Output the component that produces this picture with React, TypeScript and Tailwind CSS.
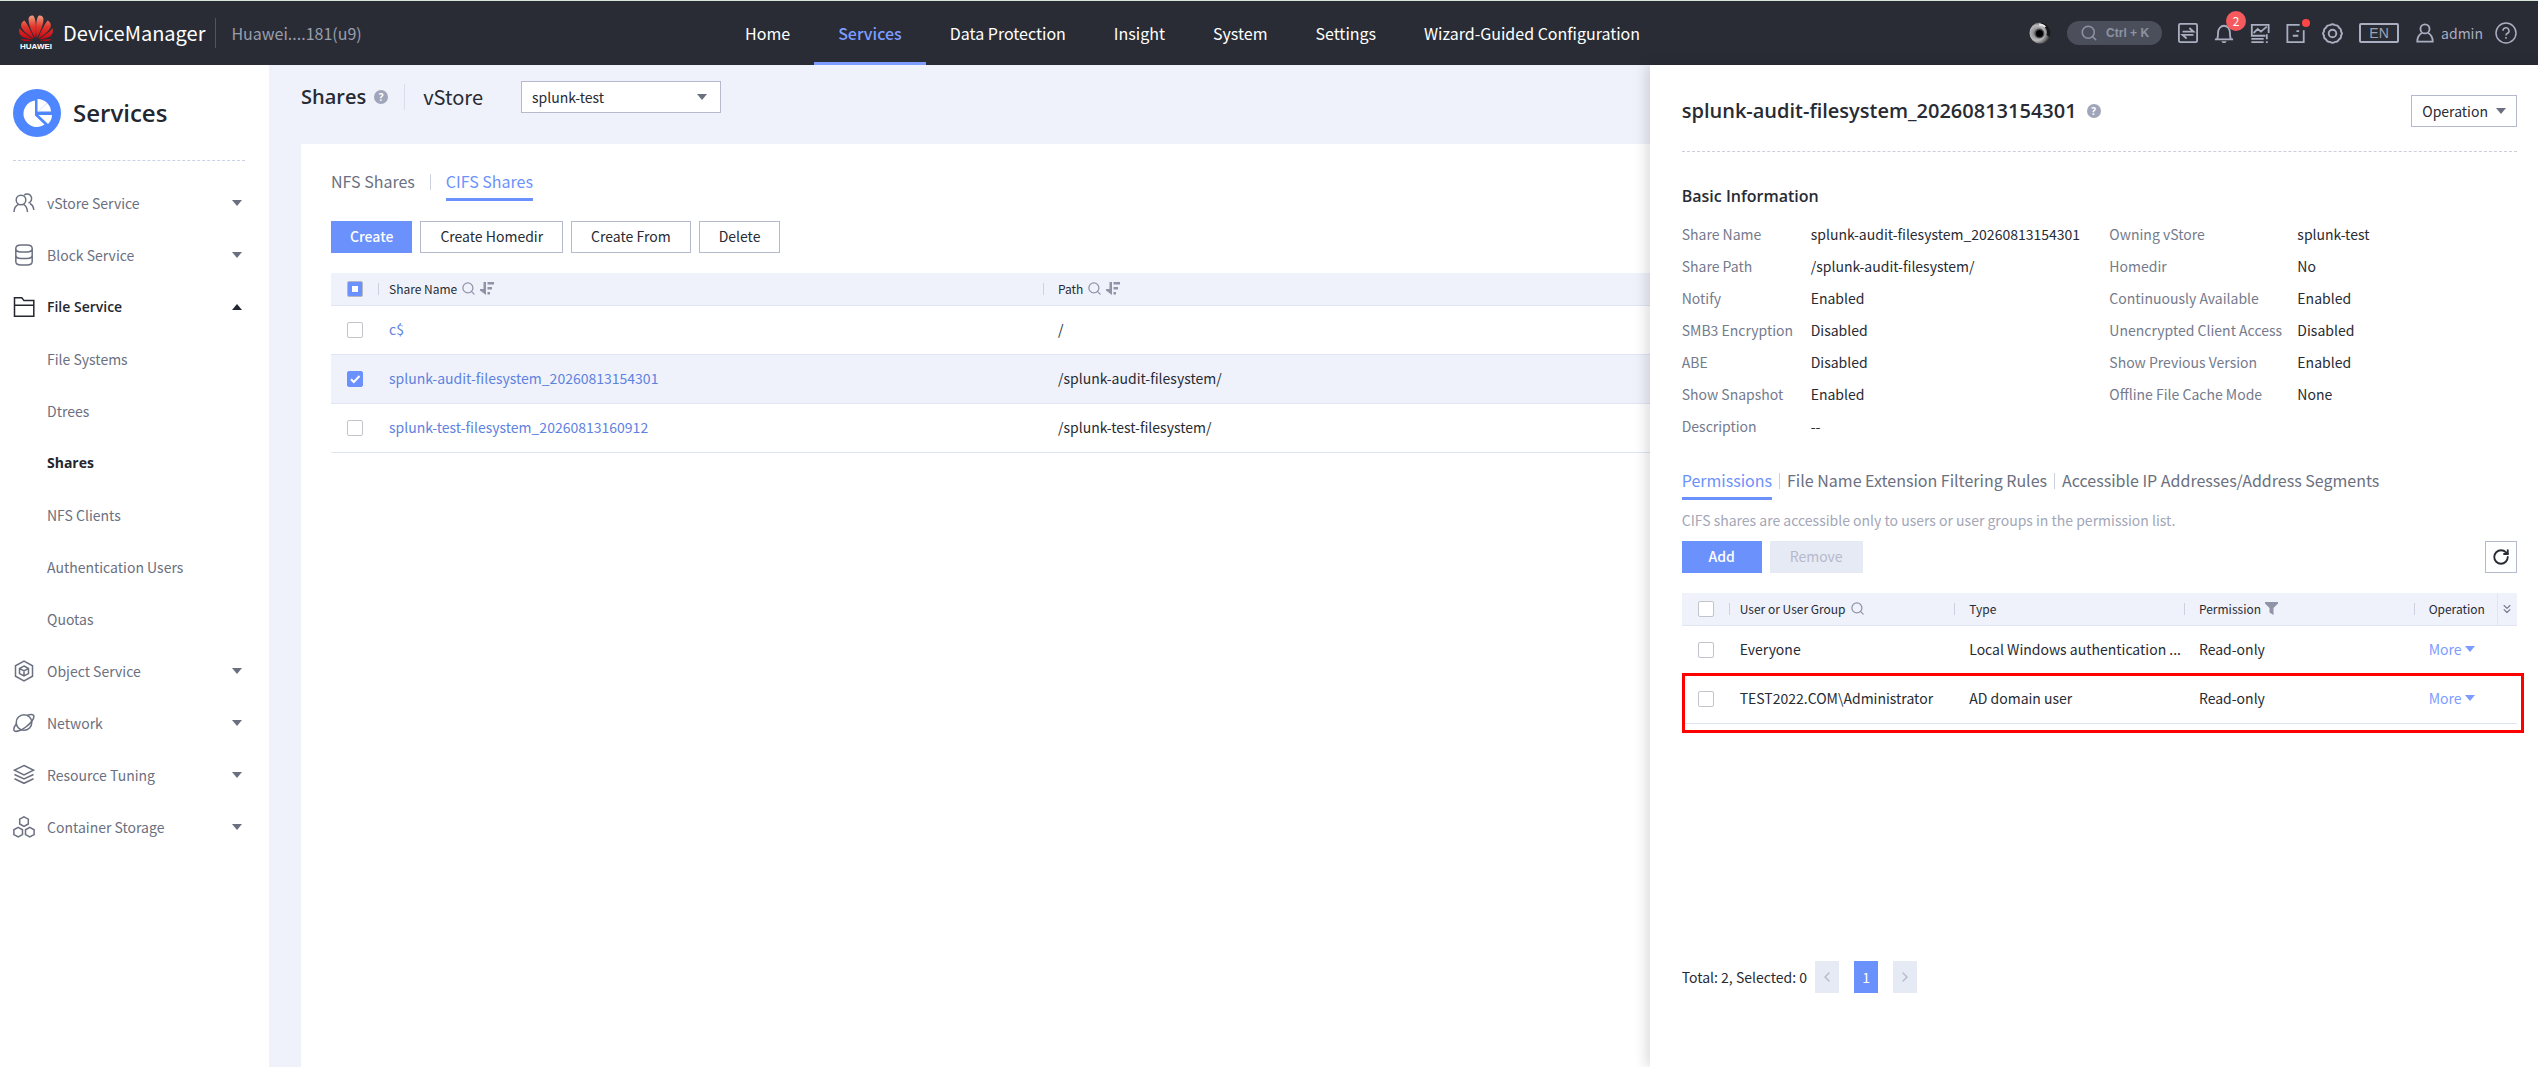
import type { ReactNode } from "react"
import { ChevronLeft, ChevronRight, ChevronsDown, RotateCw, Search } from "lucide-react"

const navItems = [
  "Home",
  "Services",
  "Data Protection",
  "Insight",
  "System",
  "Settings",
  "Wizard-Guided Configuration",
]

const shares = [
  { name: "c$", path: "/", checked: false },
  { name: "splunk-audit-filesystem_20260813154301", path: "/splunk-audit-filesystem/", checked: true },
  { name: "splunk-test-filesystem_20260813160912", path: "/splunk-test-filesystem/", checked: false },
]

const basicInfo = [
  ["Share Name", "splunk-audit-filesystem_20260813154301"],
  ["Owning vStore", "splunk-test"],
  ["Share Path", "/splunk-audit-filesystem/"],
  ["Homedir", "No"],
  ["Notify", "Enabled"],
  ["Continuously Available", "Enabled"],
  ["SMB3 Encryption", "Disabled"],
  ["Unencrypted Client Access", "Disabled"],
  ["ABE", "Disabled"],
  ["Show Previous Version", "Enabled"],
  ["Show Snapshot", "Enabled"],
  ["Offline File Cache Mode", "None"],
  ["Description", "--"],
]

const permissions = [
  { user: "Everyone", type: "Local Windows authentication ...", permission: "Read-only" },
  { user: "TEST2022.COM\\Administrator", type: "AD domain user", permission: "Read-only" },
]

const fileServiceItems = ["File Systems", "Dtrees", "Shares", "NFS Clients", "Authentication Users", "Quotas"]

/* ---------- icons ---------- */

const LineIcon = ({ children, className = "h-[22px] w-[22px]" }: { children: ReactNode; className?: string }) => (
  <svg viewBox="0 0 22 22" className={className} fill="none" stroke="currentColor" strokeWidth="1.5" aria-hidden="true">
    {children}
  </svg>
)

const VStoreIcon = () => (
  <LineIcon>
    <circle cx="8" cy="8" r="4.8" />
    <path d="M1 20c0-3.600 1.800-6.200 4.500-7.600M10.500 12.400C13 13.600 14.200 16 14.500 20M11 3.200a4.600 4.600 0 1 1 4.500 7.800M17 11.500c2.200 1.200 3.500 3 3.800 6.500" />
  </LineIcon>
)

const BlockIcon = () => (
  <LineIcon>
    <path d="M2.800 4.500C2.800 2.200 5 1 8 1h6c3 0 5.200 1.200 5.200 3.500v13c0 2.300-2.200 3.500-5.200 3.500H8c-3 0-5.200-1.200-5.200-3.500zM2.800 4.500C2.800 6.800 5 8 8 8h6c3 0 5.200-1.200 5.200-3.500M2.800 11c0 2.200 2.200 3.500 5.200 3.500h6c3 0 5.200-1.300 5.200-3.500" />
  </LineIcon>
)

const FolderIcon = () => (
  <LineIcon>
    <path d="M1.500 20.200V1.800h7.300L11 4.600h9.800v15.600zM1.500 9.200h19.300" />
  </LineIcon>
)

const ObjectIcon = () => (
  <LineIcon>
    <path d="M11 1.200l8.500 4.600v10.400L11 20.800l-8.500-4.600V5.800z" />
    <path d="M11 6l4.500 2.400v5.200L11 16l-4.500-2.400V8.400zM6.500 8.400L11 11l4.500-2.600M11 11v5" />
  </LineIcon>
)

const NetworkIcon = () => (
  <LineIcon>
    <circle cx="11" cy="10.500" r="7.800" />
    <path d="M14 3.500c3.500-1.500 6.300-1.400 6.800.3.800 2.600-3 7.500-8 11.200-4.800 3.500-10 5.500-11.600 3.500-.9-1.200-.2-3.500 2-6.500" />
  </LineIcon>
)

const LayersIcon = () => (
  <LineIcon>
    <path d="M11 1.500l9.500 4.700-9.500 4.700-9.500-4.700zM1.500 10.500L11 15l9.500-4.500M1.500 14.800L11 19.300l9.500-4.500" />
  </LineIcon>
)

const ContainerIcon = () => (
  <LineIcon>
    <path d="M11 .8l4.300 2.400V8L11 10.400 6.700 8V3.200zM5.200 11.400l4.300 2.400v4.800l-4.300 2.400-4.300-2.400v-4.800zM16.800 11.400l4.300 2.400v4.800L16.800 21l-4.300-2.400v-4.800z" />
  </LineIcon>
)

const Triangle = ({ up = false, className = "h-[6px] w-[10px]" }: { up?: boolean; className?: string }) => (
  <svg viewBox="0 0 10 6" className={className} fill="currentColor" aria-hidden="true">
    {up ? <path d="M5 0l5 6H0z" /> : <path d="M0 0h10L5 6z" />}
  </svg>
)

const SortIcon = () => (
  <svg viewBox="0 0 14 13" className="h-[13px] w-[14px] text-[#9094a8]" fill="currentColor" aria-hidden="true">
    <path d="M3.500 0h2.500v13L0 8.500V7h3.500zM7.500 0H14v2.500H7.500zM7.500 5H12v2.500H7.500zM7.500 10H10v2.500H7.500z" />
  </svg>
)

const FilterIcon = () => (
  <svg viewBox="0 0 13 13" className="h-[13px] w-[13px] text-[#9094a8]" fill="currentColor" aria-hidden="true">
    <path d="M0 0h13v1.500L8.500 6v7l-4-2.500V6L0 1.500z" />
  </svg>
)

const HelpDot = () => (
  <button
    aria-label="Help"
    className="flex h-[14px] w-[14px] items-center justify-center rounded-full bg-[#a0a5b9] font-['Open_Sans',sans-serif] text-[10px] leading-[14px] font-bold text-white"
  >
    ?
  </button>
)

const HuaweiLogo = () => (
  <div className="flex w-[34px] flex-col items-center">
    <svg viewBox="0 0 34 26" className="h-[26px] w-[34px]" aria-hidden="true">
      <defs>
        <linearGradient id="petal" x1="0" y1="0" x2="0" y2="26" gradientUnits="userSpaceOnUse">
          <stop offset="0" stopColor="#f3a083" />
          <stop offset="0.45" stopColor="#e0362c" />
          <stop offset="1" stopColor="#c4000f" />
        </linearGradient>
        <g id="half">
          <path d="M17.700 23.300C16.700 16 16.600 3.800 19.700.8c1.600-.9 4.400.3 4.700 2.800.5 5.500-3.500 14-6.700 19.700z" />
          <path d="M19 23.600C21.500 17.500 25.700 8.500 28.600 5.500c2.500 1.200 4 4 3 6.700-1.800 4.300-8.600 9.300-12.600 11.400z" />
          <path d="M20 24.300c4.500-3.200 11-7.500 13.700-11 .7 3.500-.1 7-3.600 8.700-2.700 1.300-7 2-10.100 2.300z" />
          <path d="M20 25c3.600-.4 8.500-.8 12-1-1.500 2.200-4.500 2.500-7 1.900-1.700-.4-3.500-.6-5-.9z" />
        </g>
      </defs>
      <g fill="url(#petal)">
        <use href="#half" />
        <use href="#half" transform="translate(34 0) scale(-1 1)" />
      </g>
    </svg>
    <span className="mt-0.5 font-['Liberation_Sans',sans-serif] text-[8px] leading-[8px] font-bold text-white">HUAWEI</span>
  </div>
)

const ServicesIcon = () => (
  <svg viewBox="0 0 48 48" className="h-12 w-12" aria-hidden="true">
    <circle cx="24" cy="24" r="24" fill="#4d86ff" />
    <path d="M22 11.500V26.500L31.500 35.500A13.300 13.300 0 1 1 22 11.500z" fill="#fff" />
    <path d="M24.500 10A13.500 13.500 0 0 1 38 22.500H24.500z" fill="#fff" />
    <path d="M25.500 26H39a13 13 0 0 1-4 9z" fill="#fff" />
    <path d="M25 22.500L34 14" stroke="#d5e2ff" strokeWidth="1" />
  </svg>
)

const EyeIcon = () => (
  <svg viewBox="0 0 22 22" className="h-[22px] w-[22px]" aria-hidden="true">
    <defs>
      <radialGradient id="eye" cx="0.35" cy="0.5" r="0.65">
        <stop offset="0" stopColor="#6d6d70" />
        <stop offset="0.55" stopColor="#b9b9bc" />
        <stop offset="1" stopColor="#2c2c2e" />
      </radialGradient>
    </defs>
    <circle cx="11" cy="11" r="10.500" fill="url(#eye)" />
    <path d="M11 .5A10.500 10.500 0 0 1 20.500 15l-3-2A7.500 7.500 0 0 0 15 4.500z" fill="#17171a" />
    <path d="M10 1.500c3 0 5.500 1 7 3l-1.500 1.300C14 4.300 12 3.500 10 3.700z" fill="#e6e6e8" />
    <circle cx="10.500" cy="11.500" r="5" fill="#4a4a4d" />
    <circle cx="10.500" cy="11.500" r="3.500" fill="#000" />
  </svg>
)

/* ---------- shared pieces ---------- */

interface CheckBoxProps {
  label: string
  state?: "on" | "off" | "some"
}

const CheckBox = ({ label, state = "off" }: CheckBoxProps) => (
  <span className="relative ml-4 grid h-4 w-4 place-items-center">
    <input
      type="checkbox"
      aria-label={label}
      defaultChecked={state === "on"}
      className={`h-4 w-4 appearance-none rounded-[2px] border ${
        state === "off"
          ? "border-[#c2c4c9] bg-white"
          : state === "on"
            ? "border-[#6b91fc] bg-[#6b91fc]"
            : "border-[#b5b9c6] bg-[#6b91fc]"
      }`}
    />
    {state === "on" && (
      <svg viewBox="0 0 16 16" className="pointer-events-none absolute inset-0 h-4 w-4" fill="none" stroke="#fff" strokeWidth="2" aria-hidden="true">
        <path d="M4 8.200l2.800 2.800L12.500 5" />
      </svg>
    )}
    {state === "some" && <span className="pointer-events-none absolute h-1.5 w-1.5 bg-white" />}
  </span>
)

const HeadCell = ({ children, narrow = false }: { children: ReactNode; narrow?: boolean }) => (
  <th className="p-0 text-left font-normal">
    <div
      className={`flex h-3 items-center gap-1 border-l border-[#ced2e0] text-xs leading-3 ${narrow ? "pl-2.5" : "pl-[14px]"}`}
    >
      {children}
    </div>
  </th>
)

const SearchMark = () => <Search className="h-[15px] w-[15px] text-[#9094a8]" strokeWidth={2} aria-hidden="true" />

const PlainButton = ({ children }: { children: ReactNode }) => (
  <button className="h-8 border border-[#b5b9cc] bg-white px-[19px] pb-0.5 text-sm text-[#282b33]">{children}</button>
)

/* ---------- page parts ---------- */

const TopBar = () => (
  <header className="flex h-[65px] shrink-0 items-center border-t border-[#d7e6d8] bg-[#292c35] pr-[21px]">
    <div className="flex w-[28.650%] shrink-0 items-center pl-[19px]">
      <HuaweiLogo />
      <span className="ml-[10px] text-xl text-white">DeviceManager</span>
      <span className="ml-[10px] h-[30px] w-px bg-[#515561]" />
      <span className="ml-[15px] text-base text-[#999eac]">Huawei....181(u9)</span>
    </div>
    <nav className="flex h-full items-stretch">
      {navItems.map((item) => (
        <a
          key={item}
          href="#"
          className={`flex items-center border-y-[3px] border-t-transparent px-6 text-base whitespace-nowrap ${
            item === "Services"
              ? "border-b-[#7d9cff] font-medium text-[#7d9cff]"
              : "border-b-transparent text-white"
          }`}
        >
          {item}
        </a>
      ))}
    </nav>
    <div className="ml-auto flex items-center gap-4 text-[#a9aec0]">
      <EyeIcon />
      <button className="flex h-6 w-[95px] items-center gap-2 rounded-full bg-[#4b4f5b] pl-[13px] text-[#8e93a3]">
        <Search className="h-[18px] w-[18px]" strokeWidth={2} />
        <span className="font-['Liberation_Sans',sans-serif] text-xs font-bold">Ctrl + K</span>
      </button>
      <button aria-label="Transfer">
        <LineIcon className="h-5 w-5">
          <rect x="1" y="1" width="20" height="20" rx="1.500" strokeWidth="2" />
          <path d="M5 9.500h12L12.500 5.500M17 13H5l4.500 4" strokeWidth="2" />
        </LineIcon>
      </button>
      <button aria-label="Alarms" className="relative">
        <LineIcon className="h-5 w-5">
          <path d="M1 18h20M3.500 17.500c1-2 1-4 1-7a6.500 7.500 0 0 1 13 0c0 3 0 5 1 7" strokeWidth="2" />
          <path d="M8 20h6l-1.500 2h-3z" fill="currentColor" stroke="none" />
        </LineIcon>
        <span className="absolute -top-3 left-3 flex h-5 w-5 items-center justify-center rounded-full bg-[#f65a5f] text-xs leading-5 text-white">
          2
        </span>
      </button>
      <button aria-label="Performance">
        <LineIcon className="h-5 w-5">
          <path d="M17 14H2V2h18.500v9M4 11l4.500-4.500 3.500 3L18.500 4M1.500 17.500H15M1.500 21H15M18.500 12.500V18M18.500 20v2" strokeWidth="2" />
        </LineIcon>
      </button>
      <button aria-label="Tasks" className="relative">
        <LineIcon className="h-5 w-5">
          <path d="M15 2H1.500v19h18V8M7.500 14h6M11.500 9h3" strokeWidth="2" />
        </LineIcon>
        <span className="absolute -top-1 -right-1 h-2 w-2 rounded-full bg-[#ff4545]" />
      </button>
      <button aria-label="Preferences">
        <LineIcon className="h-[21px] w-[21px]">
          <path
            d="M8.500 2.200Q11 .4 13.500 2.200 16.800 2 17.800 4.800 20.500 6.200 19.900 9 22 11 19.900 13 20.500 15.800 17.800 17.200 16.800 20 13.500 19.800 11 21.600 8.500 19.800 5.200 20 4.200 17.200 1.500 15.800 2.100 13 0 11 2.100 9 1.500 6.200 4.200 4.800 5.200 2 8.500 2.200z"
            strokeWidth="2"
          />
          <circle cx="11" cy="11" r="4" strokeWidth="2" />
        </LineIcon>
      </button>
      <button className="h-5 w-10 rounded-[2px] border-2 border-[#a9aec0] font-['Liberation_Sans',sans-serif] text-sm leading-4 text-[#9da2b3]">
        EN
      </button>
      <div className="flex items-center gap-3">
        <button className="flex items-center gap-1.5 text-sm">
          <LineIcon className="h-5 w-5">
            <circle cx="11" cy="6.500" r="5" strokeWidth="2" />
            <path d="M7.500 11C4 13 2.500 16 2.500 20.500h17c0-4.500-1.500-7.500-5-9.500" strokeWidth="2" />
          </LineIcon>
          admin
        </button>
        <button aria-label="Help">
          <LineIcon>
            <circle cx="11" cy="11" r="10" />
            <path d="M8 8.800a3 3 0 1 1 4.200 2.700c-.8.4-1.200.8-1.200 1.900M11 15v1.800" />
          </LineIcon>
        </button>
      </div>
    </div>
  </header>
)

interface MenuGroupProps {
  icon: ReactNode
  label: string
  open?: boolean
}

const MenuGroup = ({ icon, label, open = false }: MenuGroupProps) => (
  <button
    className={`flex h-[52px] w-full items-center gap-3 pr-[3px] text-left text-sm ${
      open ? "font-['Open_Sans',sans-serif] font-semibold text-[#24272f]" : "text-[#6b7080]"
    }`}
  >
    {icon}
    <span className="flex-1">{label}</span>
    <Triangle up={open} />
  </button>
)

const Sidebar = () => (
  <aside className="w-[269px] shrink-0 bg-white pt-6 pr-6 pl-[13px]">
    <div className="flex items-center gap-3">
      <ServicesIcon />
      <h1 className="font-['Open_Sans',sans-serif] text-2xl font-semibold text-[#24272f]">Services</h1>
    </div>
    <div className="mt-[23px] border-t border-dashed border-[#ccd2e6]" />
    <nav className="mt-4">
      <MenuGroup icon={<VStoreIcon />} label="vStore Service" />
      <MenuGroup icon={<BlockIcon />} label="Block Service" />
      <MenuGroup icon={<FolderIcon />} label="File Service" open />
      {fileServiceItems.map((item) => (
        <a
          key={item}
          href="#"
          className={`flex h-[52px] items-center pl-[34px] text-sm ${
            item === "Shares" ? "font-['Open_Sans',sans-serif] font-bold text-[#24272f]" : "text-[#6b7080]"
          }`}
        >
          {item}
        </a>
      ))}
      <MenuGroup icon={<ObjectIcon />} label="Object Service" />
      <MenuGroup icon={<NetworkIcon />} label="Network" />
      <MenuGroup icon={<LayersIcon />} label="Resource Tuning" />
      <MenuGroup icon={<ContainerIcon />} label="Container Storage" />
    </nav>
  </aside>
)

const SharesPage = () => (
  <main className="flex min-w-0 flex-1 flex-col bg-[#eff2fb] pr-8 pl-8">
    <div className="flex h-[79px] items-start pt-4">
      <div className="flex h-8 items-center">
        <h2 className="font-['Open_Sans',sans-serif] text-xl font-semibold text-[#282b33]">Shares</h2>
        <span className="ml-2">
          <HelpDot />
        </span>
        <span className="ml-4 h-[26px] w-px bg-[#d9deec]" />
        <label htmlFor="vstore" className="ml-[18px] text-xl">
          vStore
        </label>
        <span className="relative ml-[38px] flex items-center">
          <select
            id="vstore"
            className="h-8 w-[200px] appearance-none rounded-none border border-[#b5b9cc] bg-white px-2.5 text-sm"
          >
            <option>splunk-test</option>
          </select>
          <Triangle className="pointer-events-none absolute right-[14px] h-[6px] w-[10px] text-[#6b7080]" />
        </span>
      </div>
    </div>

    <section className="flex-1 bg-white px-[30px] pt-[22px]">
      <div className="flex items-start text-base">
        <button className="pb-0.5 leading-[30px] text-[#6b7080]">NFS Shares</button>
        <span className="mx-[15px] mt-2 h-4 w-px bg-[#ced2e0]" />
        <button className="border-b-[3px] border-[#6b91fc] pb-0.5 leading-[30px] text-[#6b91fc]">CIFS Shares</button>
      </div>

      <div className="mt-5 flex gap-2">
        <button className="h-8 bg-[#6b91fc] px-[19px] pb-0.5 text-sm font-medium text-white">Create</button>
        <PlainButton>Create Homedir</PlainButton>
        <PlainButton>Create From</PlainButton>
        <PlainButton>Delete</PlainButton>
      </div>

      <table className="mt-5 w-full table-fixed border-collapse text-left text-sm">
        <colgroup>
          <col className="w-[47px]" />
          <col className="w-[31%]" />
          <col />
        </colgroup>
        <thead>
          <tr className="h-8 border-b border-[#e0e5f4] bg-[#eff2fb]">
            <th className="p-0">
              <CheckBox label="Select all shares" state="some" />
            </th>
            <HeadCell narrow>
              Share Name
              <SearchMark />
              <SortIcon />
            </HeadCell>
            <HeadCell>
              Path
              <SearchMark />
              <SortIcon />
            </HeadCell>
          </tr>
        </thead>
        <tbody>
          {shares.map((share) => (
            <tr key={share.name} className={`h-[49px] border-b border-[#e0e5f4] ${share.checked ? "bg-[#eff2fb]" : ""}`}>
              <td className="p-0">
                <CheckBox label={`Select ${share.name}`} state={share.checked ? "on" : "off"} />
              </td>
              <td className="p-0 pb-0.5 pl-[11px]">
                <a href="#" className="text-[#5e82e0]">
                  {share.name}
                </a>
              </td>
              <td className="p-0 pb-0.5 pl-[15px]">{share.path}</td>
            </tr>
          ))}
        </tbody>
      </table>
    </section>
  </main>
)

const ShareDrawer = () => (
  <aside className="absolute inset-y-0 right-0 flex w-[35%] flex-col bg-white pt-[30px] pr-[21px] pb-[74px] pl-8 shadow-[-4px_0_12px_rgba(0,0,0,0.14)]">
    <div className="flex items-center border-b border-dashed border-[#ccced9] pb-6">
      <h2 className="font-['Open_Sans',sans-serif] text-xl font-semibold text-[#282b33]">
        splunk-audit-filesystem_20260813154301
      </h2>
      <span className="ml-2.5">
        <HelpDot />
      </span>
      <button className="ml-auto flex h-8 items-center gap-2 border border-[#b5b9cc] px-2.5 text-sm">
        Operation
        <Triangle className="h-[6px] w-[10px] text-[#6b7080]" />
      </button>
    </div>

    <h3 className="mt-8 font-['Open_Sans',sans-serif] text-base leading-6 font-semibold text-[#282b33]">
      Basic Information
    </h3>
    <dl className="mt-2.5 grid grid-cols-2 text-sm leading-8">
      {basicInfo.map(([label, value], index) => (
        <div key={label} className="flex whitespace-nowrap">
          <dt className={`shrink-0 text-[#757b8c] ${index % 2 ? "w-[198px] pl-2.5" : "w-[129px]"}`}>{label}</dt>
          <dd>{value}</dd>
        </div>
      ))}
    </dl>

    <div className="mt-[23px] flex items-start text-base text-[#6b7080]">
      <button className="border-b-[3px] border-[#6b91fc] pb-0.5 leading-[30px] text-[#6b91fc]">Permissions</button>
      <span className="mx-[7px] mt-2 h-4 w-px bg-[#ced2e0]" />
      <button className="leading-[30px]">File Name Extension Filtering Rules</button>
      <span className="mx-[7px] mt-2 h-4 w-px bg-[#ced2e0]" />
      <button className="leading-[30px]">Accessible IP Addresses/Address Segments</button>
    </div>
    <p className="mt-2.5 text-sm leading-5 text-[#a3a7b7]">
      CIFS shares are accessible only to users or user groups in the permission list.
    </p>

    <div className="mt-[11px] flex gap-2">
      <button className="h-8 w-20 bg-[#6b91fc] pb-0.5 text-sm font-medium text-white">Add</button>
      <button disabled className="h-8 bg-[#e6eaf5] px-5 pb-0.5 text-sm text-[#b5b9c9]">
        Remove
      </button>
      <button
        aria-label="Refresh"
        className="ml-auto flex h-8 w-8 items-center justify-center border border-[#b5b9cc]"
      >
        <RotateCw className="h-[18px] w-[18px]" strokeWidth={2.5} />
      </button>
    </div>

    <div className="relative mt-5">
      <table className="w-full table-fixed border-collapse text-left text-sm">
        <colgroup>
          <col className="w-[47px]" />
          <col className="w-[27%]" />
          <col className="w-[27.500%]" />
          <col className="w-[27.500%]" />
          <col />
          <col className="w-5" />
        </colgroup>
        <thead>
          <tr className="h-8 border-b border-[#e0e5f4] bg-[#eff2fb]">
            <th className="p-0">
              <CheckBox label="Select all users" />
            </th>
            <HeadCell narrow>
              User or User Group
              <SearchMark />
            </HeadCell>
            <HeadCell>Type</HeadCell>
            <HeadCell>
              Permission
              <FilterIcon />
            </HeadCell>
            <HeadCell>Operation</HeadCell>
            <th className="border-l border-[#e0e5f4] p-0">
              <button aria-label="Choose columns" className="flex w-full justify-center text-[#757b8c]">
                <ChevronsDown className="h-3.5 w-3.5" />
              </button>
            </th>
          </tr>
        </thead>
        <tbody>
          {permissions.map((row) => (
            <tr key={row.user} className="h-[49px] border-b border-[#e0e5f4]">
              <td className="p-0">
                <CheckBox label={`Select ${row.user}`} />
              </td>
              <td className="p-0 pb-0.5 pl-[11px]">{row.user}</td>
              <td className="p-0 pb-0.5 pl-[15px] whitespace-nowrap">{row.type}</td>
              <td className="p-0 pb-0.5 pl-[15px]">{row.permission}</td>
              <td className="p-0 pb-0.5 pl-[15px]" colSpan={2}>
                <button className="flex items-center gap-[3px] text-[#7c9dff]">
                  More
                  <Triangle />
                </button>
              </td>
            </tr>
          ))}
        </tbody>
      </table>
      <div className="pointer-events-none absolute top-20 -right-[7px] left-0 h-[60px] border-[3px] border-[#fe0000]" />
    </div>

    <div className="mt-auto flex items-center text-sm">
      <span>Total: 2, Selected: 0</span>
      <div className="ml-2 flex gap-[15px]">
        <button disabled aria-label="Previous page" className="grid h-8 w-6 place-items-center bg-[#e6eaf5] text-[#b5b9c9]">
          <ChevronLeft className="h-4 w-4" />
        </button>
        <button className="h-8 w-6 bg-[#6b91fc] text-white">1</button>
        <button disabled aria-label="Next page" className="grid h-8 w-6 place-items-center bg-[#e6eaf5] text-[#b5b9c9]">
          <ChevronRight className="h-4 w-4" />
        </button>
      </div>
    </div>
  </aside>
)

export default function App() {
  return (
    <div className="flex min-h-screen flex-col bg-white font-['Noto_Sans_CJK_SC','Noto_Sans',sans-serif] text-[#282b33]">
      <TopBar />
      <div className="relative flex flex-1">
        <Sidebar />
        <SharesPage />
        <ShareDrawer />
      </div>
    </div>
  )
}
